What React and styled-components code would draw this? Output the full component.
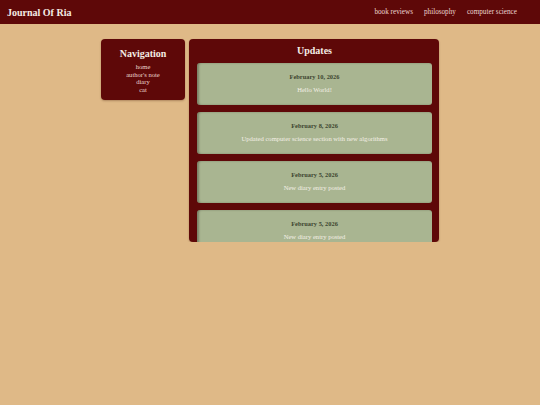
import React from "react";
import styled, { createGlobalStyle } from "styled-components";

const GlobalStyle = createGlobalStyle`
  html, body {
    margin: 0;
    padding: 0;
    background-color: #dfb987;
    font-family: "Liberation Serif", "Times New Roman", serif;
  }
`;

const Header = styled.header`
  display: flex;
  align-items: center;
  justify-content: space-between;
  height: 24px;
  padding: 0 23px 0 7px;
  background-color: #5e0808;
`;

const Brand = styled.h1`
  margin: 0;
  font-size: 10px;
  font-weight: bold;
  color: #f4ece4;
`;

const TopLinks = styled.nav`
  display: flex;
  gap: 11px;
`;

const TopLink = styled.a`
  font-size: 7.2px;
  color: #ecd6d0;
  text-decoration: none;
`;

const Main = styled.main`
  display: flex;
  justify-content: center;
  align-items: flex-start;
  gap: 4px;
  margin-top: 15px;
`;

const Panel = styled.section`
  background-color: #5e0808;
  border-radius: 4px;
  box-shadow: 0 1px 2px rgba(60, 20, 0, 0.3);
`;

const NavPanel = styled(Panel)`
  width: 84px;
  height: 61px;
  box-sizing: border-box;
  padding: 9px 0 0;
  text-align: center;
`;

const PanelTitle = styled.h2`
  margin: 0 0 ${({ $gap }) => $gap}px;
  font-size: 10px;
  line-height: 12px;
  font-weight: bold;
  color: #f4ece4;
`;

const NavList = styled.ul`
  list-style: none;
  margin: 0;
  padding: 0;
`;

const NavItem = styled.li`
  font-size: 6.6px;
  line-height: 7.5px;
  color: #ecd6d0;
`;

const UpdatesPanel = styled(Panel)`
  width: 250px;
  height: 203px;
  box-sizing: border-box;
  padding: 6px 7px 0 8px;
  overflow: hidden;
  text-align: center;
`;

const CardList = styled.div`
  display: flex;
  flex-direction: column;
  gap: 7px;
`;

const Card = styled.article`
  height: 42px;
  box-sizing: border-box;
  padding: 10px 6px 0;
  background-color: #a9b591;
  border-radius: 3px;
  box-shadow: inset 2px 0 2px rgba(40, 40, 30, 0.35);
`;

const CardDate = styled.h3`
  margin: 0 0 5px;
  font-size: 6.4px;
  line-height: 8px;
  font-weight: bold;
  color: #3d4530;
`;

const CardText = styled.p`
  margin: 0;
  font-size: 6.6px;
  line-height: 8px;
  color: #f4f0e6;
`;

const topLinks = ["book reviews", "philosophy", "computer science"];
const navLinks = ["home", "author's note", "diary", "cat"];
const updates = [
  { date: "February 10, 2026", text: "Hello World!" },
  { date: "February 8, 2026", text: "Updated computer science section with new algorithms" },
  { date: "February 5, 2026", text: "New diary entry posted" },
  { date: "February 5, 2026", text: "New diary entry posted" },
];

const App = () => {
  return (
    <>
      <GlobalStyle />
      <Header>
        <Brand>Journal Of Ria</Brand>
        <TopLinks>
          {topLinks.map((l) => (
            <TopLink key={l} href="#">{l}</TopLink>
          ))}
        </TopLinks>
      </Header>
      <Main>
        <NavPanel>
          <PanelTitle $gap={3}>Navigation</PanelTitle>
          <NavList>
            {navLinks.map((l) => (
              <NavItem key={l}>{l}</NavItem>
            ))}
          </NavList>
        </NavPanel>
        <UpdatesPanel>
          <PanelTitle $gap={6}>Updates</PanelTitle>
          <CardList>
            {updates.map((u, i) => (
              <Card key={i}>
                <CardDate>{u.date}</CardDate>
                <CardText>{u.text}</CardText>
              </Card>
            ))}
          </CardList>
        </UpdatesPanel>
      </Main>
    </>
  );
};

export default App;
